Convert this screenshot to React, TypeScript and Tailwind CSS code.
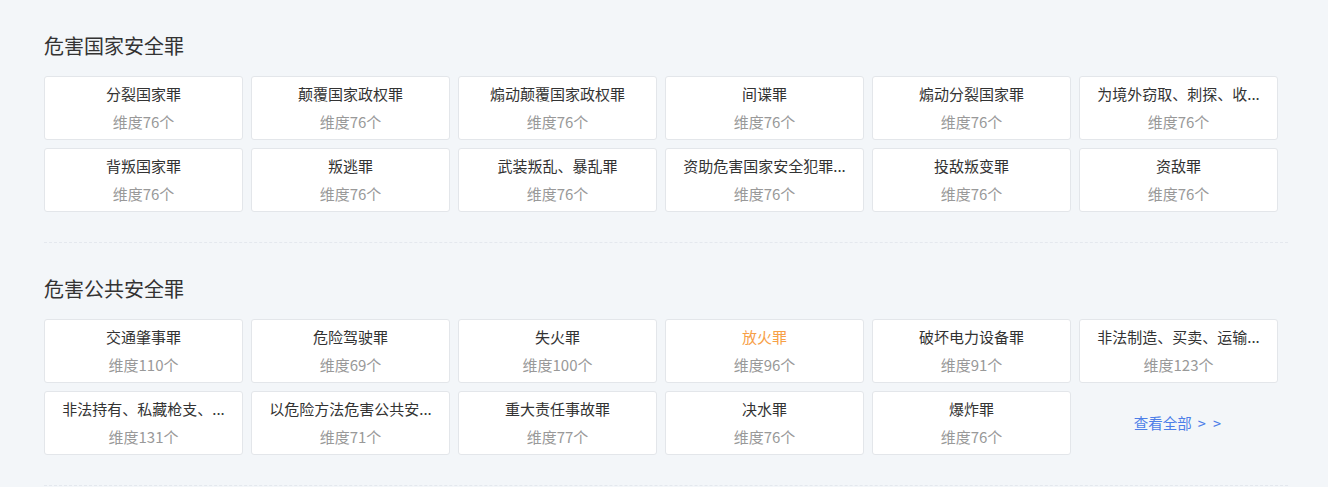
import React from "react";

type Item = { name: string; count: number; active?: boolean };

const sec1: Item[] = [
  { name: "分裂国家罪", count: 76 },
  { name: "颠覆国家政权罪", count: 76 },
  { name: "煽动颠覆国家政权罪", count: 76 },
  { name: "间谍罪", count: 76 },
  { name: "煽动分裂国家罪", count: 76 },
  { name: "为境外窃取、刺探、收...", count: 76 },
  { name: "背叛国家罪", count: 76 },
  { name: "叛逃罪", count: 76 },
  { name: "武装叛乱、暴乱罪", count: 76 },
  { name: "资助危害国家安全犯罪...", count: 76 },
  { name: "投敌叛变罪", count: 76 },
  { name: "资敌罪", count: 76 },
];

const sec2: Item[] = [
  { name: "交通肇事罪", count: 110 },
  { name: "危险驾驶罪", count: 69 },
  { name: "失火罪", count: 100 },
  { name: "放火罪", count: 96, active: true },
  { name: "破坏电力设备罪", count: 91 },
  { name: "非法制造、买卖、运输...", count: 123 },
  { name: "非法持有、私藏枪支、...", count: 131 },
  { name: "以危险方法危害公共安...", count: 71 },
  { name: "重大责任事故罪", count: 77 },
  { name: "决水罪", count: 76 },
  { name: "爆炸罪", count: 76 },
];

function Card({ item }: { item: Item }) {
  return (
    <div className="h-[64px] bg-white border border-[#e3e6ea] rounded-[3px] px-[6px] pt-[6px] flex flex-col items-center">
      <div
        className={`w-full text-center whitespace-nowrap text-[15px] leading-[22px] ${
          item.active ? "text-[#f7a047]" : "text-[#333333]"
        }`}
      >
        {item.name}
      </div>
      <div className="w-full text-center whitespace-nowrap text-[15px] leading-[22px] mt-[6px] text-[#999999]">
        维度{item.count}个
      </div>
    </div>
  );
}

function Section({ title, items, more }: { title: string; items: Item[]; more?: boolean }) {
  return (
    <section className="pt-[34px] pb-[30px] border-b border-dashed border-[#e4e8ee]">
      <h2 className="text-[20px] leading-[24px] text-[#333333] font-normal mb-[18px]">{title}</h2>
      <div className="grid grid-cols-[repeat(6,199px)] gap-[8px]">
        {items.map((it, i) => (
          <Card key={i} item={it} />
        ))}
        {more && (
          <div className="h-[64px] flex items-center justify-center text-[14.5px] text-[#4d7ee8]">
            查看全部 <span className="ml-[6px] tracking-[2px]">&gt; &gt;</span>
          </div>
        )}
      </div>
    </section>
  );
}

export default function App() {
  return (
    <div
      className="w-[1328px] h-[487px] overflow-hidden bg-[#f3f6f9] pl-[44px] pr-[40px]"
      style={{ fontFamily: '"Noto Sans CJK SC", "Noto Sans", sans-serif' }}
    >
      <Section title="危害国家安全罪" items={sec1} />
      <Section title="危害公共安全罪" items={sec2} more />
    </div>
  );
}
